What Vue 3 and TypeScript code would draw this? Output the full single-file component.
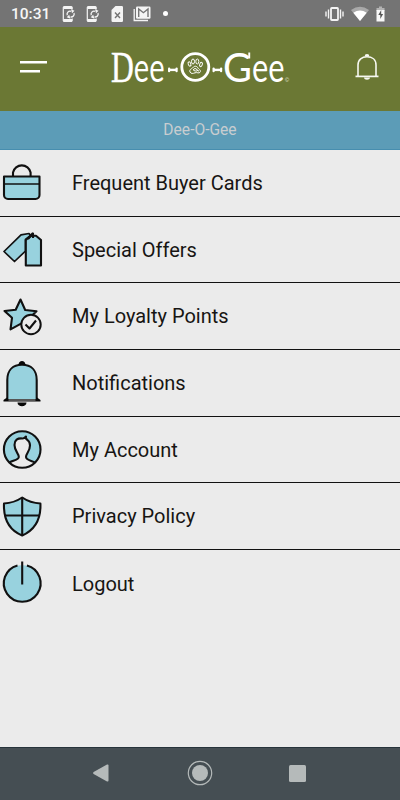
<script setup lang="ts">
type IconName = 'bag' | 'tags' | 'star' | 'bell' | 'user' | 'shield' | 'power'

interface MenuItem {
  label: string
  icon: IconName
}

const items: MenuItem[] = [
  { label: 'Frequent Buyer Cards', icon: 'bag' },
  { label: 'Special Offers', icon: 'tags' },
  { label: 'My Loyalty Points', icon: 'star' },
  { label: 'Notifications', icon: 'bell' },
  { label: 'My Account', icon: 'user' },
  { label: 'Privacy Policy', icon: 'shield' },
  { label: 'Logout', icon: 'power' },
]
</script>

<template>
  <div class="screen">
    <div class="status">
      <span class="clock">10:31</span>
      <svg v-for="n in 2" :key="n" class="phone" width="14" height="18" viewBox="0 0 14 18">
        <path d="M2.500 1.600h6.500a1.200 1.200 0 0 1 1.200 1.200V4.500M10.200 13.500v1.700a1.200 1.200 0 0 1-1.200 1.200H2.500a1.200 1.200 0 0 1-1.200-1.200V2.800a1.200 1.200 0 0 1 1.200-1.200" fill="none" stroke="#f4f4f4" stroke-width="1.200" />
        <path d="M1.500 1.500h8.500V4h-8.500zM1.500 14h8.500v2.500h-8.500z" fill="#f4f4f4" />
        <path d="M5.300 10.300a3 3 0 0 1 3.700-4M12 8a3 3 0 0 1-3.500 3.900" fill="none" stroke="#f4f4f4" stroke-width="1.300" />
        <path d="M9 4.300l3.500 1.500-2.500 2.500zM8.500 13.700l-3.800-1.500 2.500-2.500z" fill="#f4f4f4" />
      </svg>
      <svg class="simcard" width="13" height="18" viewBox="0 0 13 18">
        <path d="M4.500 1h6.300A1.200 1.200 0 0 1 12 2.200v13.600a1.200 1.200 0 0 1-1.200 1.200H1.700a1.200 1.200 0 0 1-1.200-1.200V5z" fill="#f4f4f4" />
        <path d="M4 7.500l5 5.500M9 7.500L4 13" stroke="#747474" stroke-width="1.400" />
      </svg>
      <svg class="mail" width="18" height="16" viewBox="0 0 18 16">
        <path d="M1.200 3v11.500H15" fill="none" stroke="#f4f4f4" stroke-width="1.300" />
        <rect x="3" y=".5" width="14.500" height="12.300" rx="1.200" fill="#f4f4f4" />
        <path d="M5.700 11V3l4.700 3.700L15 3v8" fill="none" stroke="#747474" stroke-width="1.400" />
      </svg>
      <span class="dot"></span>
      <div class="spacer"></div>
      <svg width="19" height="16" viewBox="0 0 19 16">
        <rect x="6" y="2" width="7" height="12" rx=".8" fill="none" stroke="#f4f4f4" stroke-width="1.800" />
        <path d="M3.500 3.500v9M15.500 3.500v9M1 5.500v5M18 5.500v5" stroke="#f4f4f4" stroke-width="1.400" />
      </svg>
      <svg class="wifi" width="18" height="15" viewBox="0 0 18 15">
        <path d="M0 4Q9-2.500 18 4L9 15z" fill="#a9a9a9" />
        <path d="M2.300 6.800Q9 2 15.700 6.800L9 15z" fill="#fff" />
      </svg>
      <svg class="battery" width="9" height="16" viewBox="0 0 9 16">
        <path d="M3 .5h3V2h2.500v3H.5V2H3z" fill="#b3b3b3" />
        <path d="M.5 4h8v11.500h-8z" fill="#f8f8f8" />
        <path d="M5.200 4L2.300 9h2v4l2.800-5H5.200z" fill="#555" />
      </svg>
    </div>

    <header class="header">
      <div class="burger"><i></i><i class="short"></i></div>
      <svg class="logo" width="182" height="54" viewBox="0 -6 182 54">
        <text class="brand" x="1" y="35.500" textLength="53.500" lengthAdjust="spacingAndGlyphs"><tspan class="initial">D</tspan>ee</text>
        <g fill="#fff">
          <rect x="59" y="22.700" width="8" height="2.400" />
          <rect x="58" y="21.500" width="2.200" height="4.800" rx="1" />
          <rect x="65.500" y="21.500" width="2.200" height="4.800" rx="1" />
          <rect x="104" y="22.700" width="8" height="2.400" />
          <rect x="102.500" y="21.500" width="2.200" height="4.800" rx="1" />
          <rect x="110" y="21.500" width="2.200" height="4.800" rx="1" />
        </g>
        <ellipse cx="85.300" cy="21" rx="13.500" ry="13.300" fill="none" stroke="#fff" stroke-width="2.800" />
        <g fill="none" stroke="#fff" stroke-width="1">
          <ellipse cx="79.500" cy="18" rx="1.300" ry="2.200" transform="rotate(-20 79.500 18)" />
          <ellipse cx="83" cy="15.500" rx="1.500" ry="2.500" />
          <ellipse cx="87.300" cy="15.500" rx="1.500" ry="2.500" />
          <ellipse cx="91" cy="18.500" rx="1.300" ry="2.200" transform="rotate(20 91 18.500)" />
          <path d="M80 26c-1-3 2-3 3-4.500 1.500-2 4-1.500 5 .5s3.500 2 2 4.300c-1 1.500-3-.3-5 .5s-4 1.200-5-.8zM83 24q2-3 4-.5t-3.500 1M87 24l2 1.200" />
        </g>
        <text class="brand" x="113" y="35.500" textLength="29" lengthAdjust="spacingAndGlyphs">G</text>
        <text class="brand" x="142" y="35.500" textLength="32.500" lengthAdjust="spacingAndGlyphs">ee</text>
        <path d="M138.300 6.500h1.900v6h-1.900z" fill="#fff" />
        <text class="mark" x="175" y="35.500">©</text>
      </svg>
      <svg class="alert" width="24" height="28" viewBox="0 0 24 28">
        <path d="M3 23V12C3 6.500 7 3.800 12 3.800S21 6.500 21 12v11" fill="none" stroke="#f7f8f1" stroke-width="1.600" />
        <path d="M.5 23.400h23" stroke="#f7f8f1" stroke-width="1.700" />
        <path d="M9.600 3.500a2.400 2.400 0 0 1 4.800 0zM9 24.500h6c0 3-6 3-6 0z" fill="#f7f8f1" />
      </svg>
    </header>

    <div class="title">Dee-O-Gee</div>

    <nav class="menu">
      <div v-for="item in items" :key="item.icon" class="row">
        <svg class="icon" width="44" height="48" viewBox="0 0 44 48">
          <g v-if="item.icon === 'bag'">
            <path d="M13 17.500v-4a9 9 0 0 1 17.600 0v4" class="line" />
            <path d="M4 17.500h35.500V36a4 4 0 0 1-4 4H8a4 4 0 0 1-4-4z" class="fill" />
            <path d="M4 25h35.500" class="line thin" />
          </g>
          <g v-else-if="item.icon === 'tags'">
            <path d="M4 26.500L21 9.800l8-1.300 1.500 2-5 4v11.500L14.500 36.500z" class="fill thin" />
            <path d="M25.800 40.500V15l5.200-4.200h5L41 15v25.500z" class="fill" />
            <path d="M28 14l5-5.500v4.500M30 11l3-3" class="line" />
          </g>
          <g v-else-if="item.icon === 'star'">
            <path d="M20.500 7.500l4.700 10.500 11.300 1.300-8.500 8-6.500 4-11 6 1.500-11.500L4.500 19l11.200-1.300z" class="fill" />
            <circle cx="31" cy="32.500" r="9.700" class="clear" />
            <path d="M25.500 32.500l4 4 6.500-8" class="line" />
          </g>
          <g v-else-if="item.icon === 'bell'">
            <path d="M7.300 41V21C7.300 11 13 5.800 22 5.800S36.700 11 36.700 21v20z" class="fill" />
            <path d="M3.500 41l3.500-2.500h1v1.500h28v-1.500h1l3.500 2.500v1.500h-37zM17.500 43.500h9c0 5-9 5-9 0zM18.500 6c0-5.500 7-5.500 7 0z" class="solid" />
            <path d="M8.500 41h27" stroke="#555" stroke-width="2" />
          </g>
          <g v-else-if="item.icon === 'user'">
            <circle cx="22.200" cy="24.500" r="18.300" fill="#98d2de" />
            <path d="M9.500 37.500c3-2.500 9-2 9.300-5.500.3-3-4.300-6-4.300-12 0-5 3-7.500 8-7.500s7.500 3 7.500 8c0 6-4.300 8.500-4 11.500.3 3.500 6 3.500 9 5.500Q22 47 9.500 37.500z" fill="#ebebeb" />
            <path d="M9.500 37.500c3-2.500 9-2 9.300-5.500.3-3-4.300-6-4.300-12 0-5 3-7 8-6.500q2 0 3.500-2-1 2 1.500 3.500c2 1.500 2.500 3 2.500 5.500 0 6-4.300 8.500-4 11.500.3 3.500 6 3.500 9 5.500" class="line" />
            <circle cx="22.200" cy="24.500" r="18.300" class="line" />
          </g>
          <g v-else-if="item.icon === 'shield'">
            <path d="M22.200 5.500q8 5.500 18.200 6c.5 12-3.400 25.500-18.200 32C7.500 37.500 3.500 24 4 11.500q10-.5 18.200-6z" class="fill" />
            <path d="M22.200 5.500v38M4.500 23.500h35.500" class="line" />
          </g>
          <g v-else>
            <circle cx="22.200" cy="24.500" r="18.300" fill="#98d2de" />
            <path d="M17.500 6.500a18.400 18.400 0 1 0 9.400 0" class="line" />
            <path d="M22.200 2.500v23" class="line" />
          </g>
        </svg>
        <span class="label">{{ item.label }}</span>
      </div>
    </nav>

    <footer class="nav">
      <svg width="18" height="20" viewBox="0 0 18 20"><path d="M1.600 9L15 1.600q1.500-.6 1.500 1v14.800q0 1.600-1.500 1L1.600 11q-1.200-1 0-2z" fill="#b5baba" /></svg>
      <svg width="26" height="26" viewBox="0 0 26 26"><circle cx="13" cy="13" r="11.700" fill="none" stroke="#b5baba" stroke-width="1.200" /><circle cx="13" cy="13" r="8" fill="#b5baba" /></svg>
      <span class="square"></span>
    </footer>
  </div>
</template>

<style>
body { margin: 0; background: #ebebeb; }
</style>

<style scoped>
.screen { width: 400px; height: 800px; display: flex; flex-direction: column; background: #ebebeb; font-family: Roboto, sans-serif; overflow: hidden; }
.status { height: 27px; flex: none; box-sizing: border-box; padding: 0 15px 0 11px; display: flex; align-items: center; background: #747474; color: #f6f6f6; }
.clock { width: 51px; font-size: 15.500px; font-weight: 500; line-height: 27px; letter-spacing: 0; padding-top: 1px; }
.phone { margin-right: 10px; }
.simcard { margin-left: 1px; margin-right: 9px; }
.dot { width: 5px; height: 5px; border-radius: 50%; background: #fff; margin-left: 12px; }
.spacer { flex: 1; }
.wifi { margin-left: 7px; }
.battery { margin-left: 7px; }
.header { height: 84px; flex: none; box-sizing: border-box; padding: 0 21px 5px 20px; display: flex; align-items: center; background: #6b7834; }
.burger { width: 90px; display: flex; flex-direction: column; gap: 6px; }
.burger i { width: 27px; height: 3px; background: linear-gradient(#fff 67%, #b7bd9c 67%); }
.burger .short { width: 20px; }
.logo { margin-top: 1px; overflow: visible; }
.alert { margin-left: auto; }
.brand { font: 40.500px Lato, sans-serif; fill: #fff; }
.initial { font: 44px "Liberation Serif", serif; stroke: #fff; stroke-width: .5px; }
.mark { font: 5.500px "Liberation Sans", sans-serif; fill: #e8ebdd; }
.title { height: 39px; flex: none; box-sizing: border-box; background: #5c9cb7; border-bottom: 1px solid #478eaf; color: #c8cdd0; font-size: 15.600px; line-height: 39px; text-align: center; }
.menu { flex: 1; }
.row { height: 66.67px; box-sizing: border-box; display: flex; align-items: center; border-bottom: 1px solid #111; }
.row:last-child { border-bottom: 0; }
.icon { flex: none; }
.label { margin-left: 28px; padding-top: .5px; font-size: 20px; line-height: 28px; letter-spacing: 0; color: #171513; }
.line { fill: none; stroke: #111; stroke-width: 2.100; stroke-linejoin: round; }
.fill { fill: #98d2de; stroke: #111; stroke-width: 2.100; stroke-linejoin: round; }
.thin { stroke-width: 1.700; }
.clear { fill: #ebebeb; stroke: #111; stroke-width: 2; }
.solid { fill: #080808; }
.nav { height: 53px; flex: none; box-sizing: border-box; padding: 0 94px 2px 92px; display: flex; align-items: center; justify-content: space-between; background: #454e53; border-top: 1px solid #27343b; }
.square { width: 17px; height: 17px; border-radius: 1.500px; background: #b5baba; }
</style>
